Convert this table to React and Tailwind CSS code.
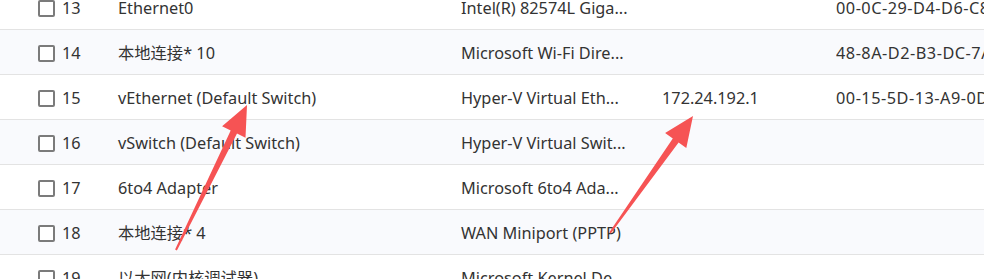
const rows = [
  { no: 13, name: 'Ethernet0', desc: 'Intel(R) 82574L Giga...', ip: '', mac: '00-0C-29-D4-D6-C8' },
  { no: 14, name: '本地连接* 10', desc: 'Microsoft Wi-Fi Dire...', ip: '', mac: '48-8A-D2-B3-DC-7A' },
  { no: 15, name: 'vEthernet (Default Switch)', desc: 'Hyper-V Virtual Eth...', ip: '172.24.192.1', mac: '00-15-5D-13-A9-0D' },
  { no: 16, name: 'vSwitch (Default Switch)', desc: 'Hyper-V Virtual Swit...', ip: '', mac: '' },
  { no: 17, name: '6to4 Adapter', desc: 'Microsoft 6to4 Ada...', ip: '', mac: '' },
  { no: 18, name: '本地连接* 4', desc: 'WAN Miniport (PPTP)', ip: '', mac: '' },
  { no: 19, name: '以太网(内核调试器)', desc: 'Microsoft Kernel De...', ip: '', mac: '' },
]

function Row({ row, odd }) {
  return (
    <div
      className={
        'grid h-[45px] grid-cols-[118px_343px_201px_174px_1fr] items-center border-b border-[#e3e3e3] pt-[2px] whitespace-nowrap ' +
        (odd ? 'bg-[#f9fafd]' : 'bg-white')
      }
    >
      <div className="flex items-center gap-[7px] pl-[38px]">
        <span className="h-[17px] w-[17px] rounded-[2px] border-2 border-[#7b7b7b] bg-white" />
        <span>{row.no}</span>
      </div>
      <div>{row.name}</div>
      <div>{row.desc}</div>
      <div>{row.ip}</div>
      <div className="overflow-hidden tracking-[0.5px]">{row.mac}</div>
    </div>
  )
}

export default function App() {
  return (
    <div
      className="relative h-[279px] w-[984px] overflow-hidden bg-white text-[16.3px] text-[#333333]"
      style={{ fontFamily: '"Noto Sans", "Noto Sans CJK SC", sans-serif' }}
    >
      <div className="-mt-[15px]">
        {rows.map((r, i) => (
          <Row key={r.no} row={r} odd={i % 2 === 1} />
        ))}
      </div>
      <svg className="pointer-events-none absolute left-0 top-0" width="984" height="279" viewBox="0 0 984 279">
        <polygon
          fill="#f65354"
          points="175.1,249.6 230.7,130.5 222.1,126.3 247,105 245.5,137.7 237,133.5 176.9,250.4"
        />
        <polygon
          fill="#f65354"
          points="609.2,232.4 672.8,138.5 665.1,133 693,116 686.3,148 678.6,142.5 610.8,233.6"
        />
      </svg>
    </div>
  )
}
